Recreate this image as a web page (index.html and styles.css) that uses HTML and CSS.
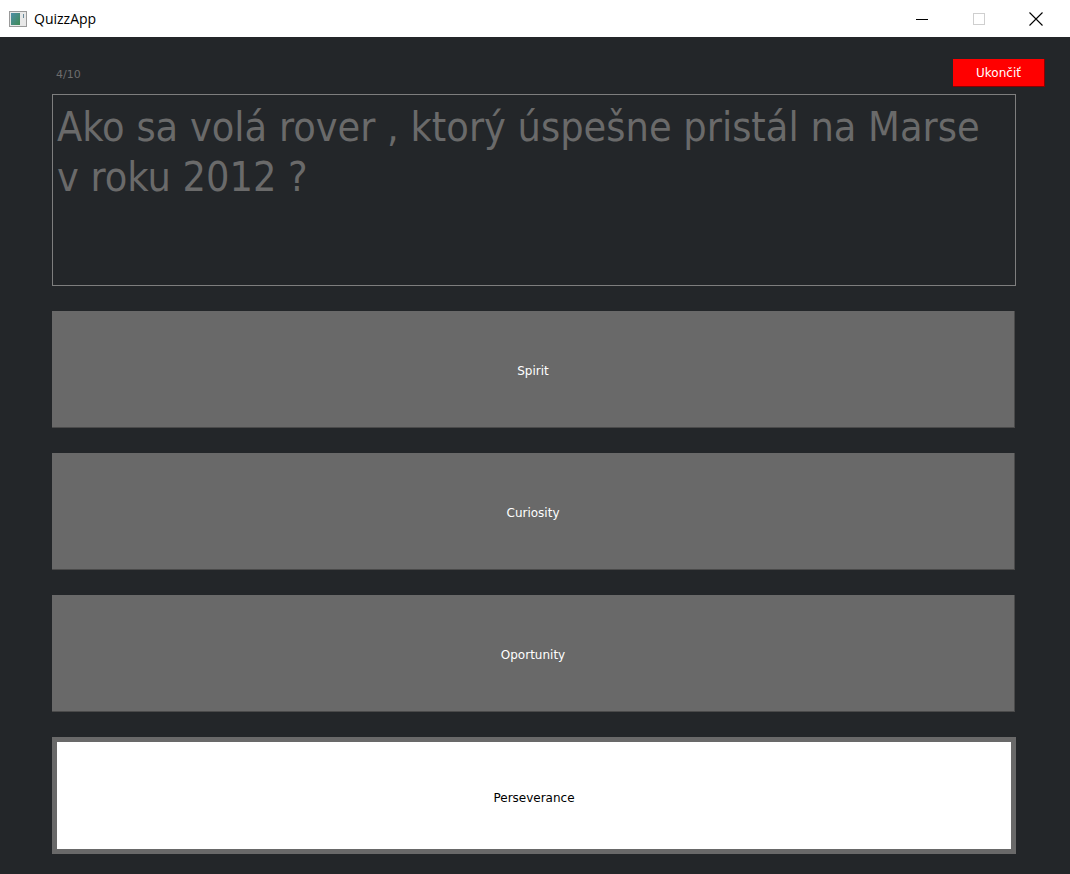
FILE: index.html
```html
<!DOCTYPE html>
<html lang="sk">
<head>
<meta charset="utf-8">
<title>QuizzApp</title>
<link rel="stylesheet" href="styles.css">
</head>
<body>
<div class="titlebar">
  <div class="title-left">
    <svg class="app-icon" width="18" height="16" viewBox="0 0 18 16">
      <defs>
        <linearGradient id="g" x1="0" y1="0" x2="1" y2="1">
          <stop offset="0" stop-color="#4f8fa8"/>
          <stop offset="1" stop-color="#3f8a55"/>
        </linearGradient>
      </defs>
      <rect x="0.5" y="0.5" width="17" height="15" fill="#e8e8e8" stroke="#9a9a9a"/>
      <rect x="2" y="2" width="9" height="12" fill="url(#g)"/>
      <rect x="14" y="3" width="1" height="4" fill="#6a8a9a"/>
    </svg>
    <span class="app-title">QuizzApp</span>
  </div>
  <div class="controls">
    <span class="ctl">
      <svg width="12" height="12" viewBox="0 0 12 12"><path d="M0 6.5H12" stroke="#000" stroke-width="1"/></svg>
    </span>
    <span class="ctl">
      <svg width="12" height="12" viewBox="0 0 12 12"><rect x="0.5" y="0.5" width="11" height="11" fill="none" stroke="#cfcfcf"/></svg>
    </span>
    <span class="ctl">
      <svg width="16" height="14" viewBox="0 0 16 14"><path d="M1.5 0.5L14.5 13.5M14.5 0.5L1.5 13.5" stroke="#000" stroke-width="1.1"/></svg>
    </span>
  </div>
</div>
<main class="content">
  <div class="header">
    <span class="progress">4/10</span>
    <button class="quit">Ukončiť</button>
  </div>
  <div class="question">Ako sa volá rover , ktorý úspešne pristál na Marse v roku 2012 ?</div>
  <div class="answers">
    <button class="answer">Spirit</button>
    <button class="answer">Curiosity</button>
    <button class="answer">Oportunity</button>
    <button class="answer selected">Perseverance</button>
  </div>
</main>
</body>
</html>
```
FILE: styles.css
```css
html, body {
  margin: 0;
  padding: 0;
  height: 100%;
  background: #232629;
  font-family: "DejaVu Sans", "Liberation Sans", sans-serif;
}
.titlebar {
  height: 37px;
  background: #ffffff;
  display: flex;
  justify-content: space-between;
  align-items: center;
}
.title-left {
  display: flex;
  align-items: center;
  padding-left: 9px;
}
.app-icon {
  display: block;
  margin-right: 7px;
}
.app-title {
  font-family: "Open Sans", "Noto Sans", sans-serif;
  font-size: 14px;
  color: #000;
}
.controls {
  display: flex;
  height: 100%;
  padding-right: 6px;
}
.ctl {
  width: 57px;
  display: flex;
  align-items: center;
  justify-content: center;
}
.ctl svg { display: block; }
.content {
  padding: 22px 25px 0 52px;
}
.header {
  display: flex;
  justify-content: space-between;
  align-items: center;
  height: 28px;
}
.progress {
  padding-left: 4px;
  padding-top: 2px;
  font-size: 11px;
  color: #6d6d6d;
}
.quit {
  width: 92px;
  height: 28px;
  background: #ff0000;
  border: none;
  border-right: 1px solid #8a0000;
  border-bottom: 1px solid #8a0000;
  color: #ffffff;
  font-family: "DejaVu Sans", sans-serif;
  font-size: 12px;
  padding: 1px 0 0;
}
.question {
  margin-top: 7px;
  width: 964px;
  height: 192px;
  box-sizing: border-box;
  border: 1px solid #7e7e7e;
  padding: 7px 4px 0;
  font-family: "DejaVu Sans Condensed", "DejaVu Sans", sans-serif;
  font-size: 41px;
  line-height: 50px;
  color: #6a6a6a;
}
.answers {
  margin-top: 25px;
  width: 964px;
  display: flex;
  flex-direction: column;
  align-items: flex-start;
  gap: 25px;
}
.answer {
  width: 963px;
  height: 117px;
  background: #696969;
  border: none;
  border-right: 1px solid #4a4a4a;
  border-bottom: 1px solid #4a4a4a;
  color: #ffffff;
  font-family: "DejaVu Sans", sans-serif;
  font-size: 12px;
  padding: 4px 0 0;
}
.answer.selected {
  width: 964px;
  background: #ffffff;
  border: 5px solid #696969;
  color: #000000;
}
```
